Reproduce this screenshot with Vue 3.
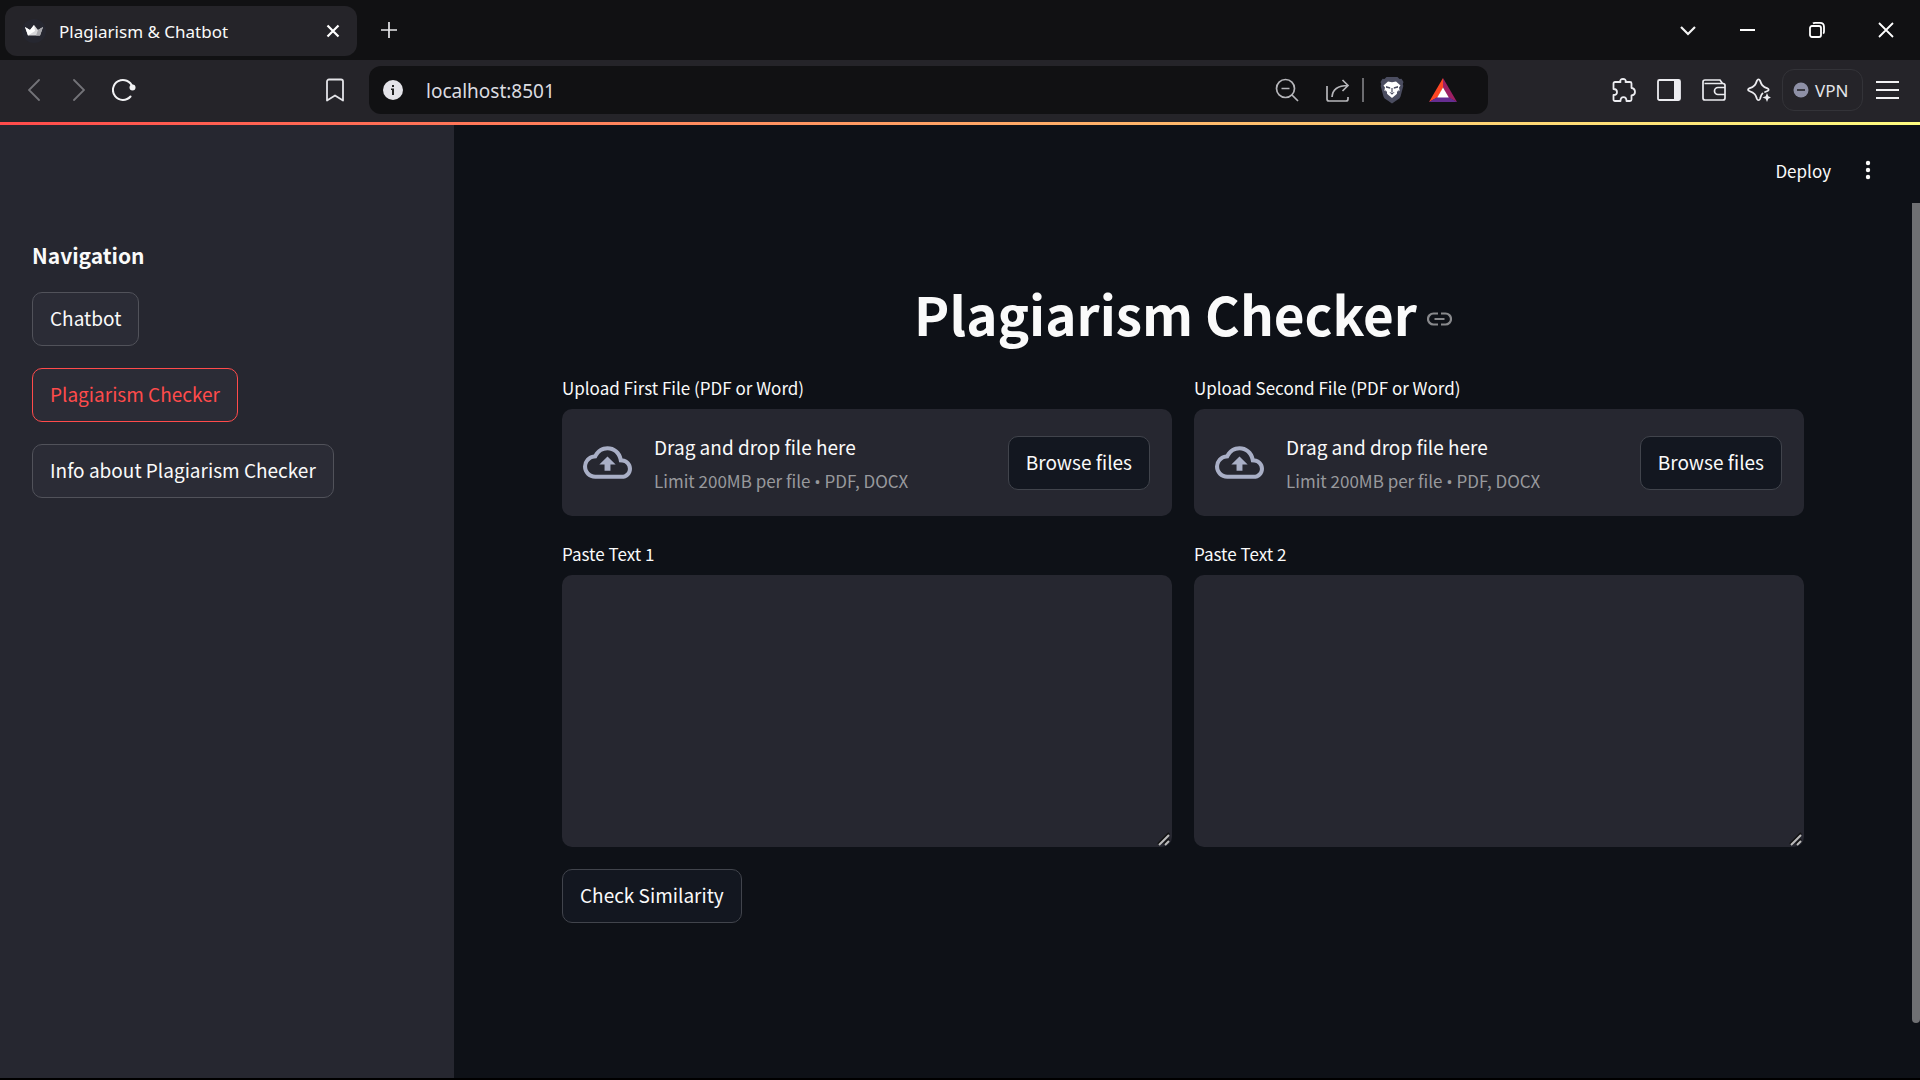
<script setup>
import { ref } from 'vue'

const address = ref('localhost:8501')
const pages = ['Chatbot', 'Plagiarism Checker', 'Info about Plagiarism Checker']
const current = ref('Plagiarism Checker')
const documents = [
  { id: 1, upload: 'Upload First File (PDF or Word)', paste: 'Paste Text 1' },
  { id: 2, upload: 'Upload Second File (PDF or Word)', paste: 'Paste Text 2' },
]
const texts = ref({ 1: '', 2: '' })

function browse(id) {
  document.getElementById(`file-${id}`).click()
}
</script>

<template>
  <div class="window">
    <div class="tabs">
      <div class="tab">
        <svg class="crown" width="24" height="24" viewBox="0 0 24 24">
          <circle cx="12" cy="12" r="12" fill="#262730" />
          <path d="M3 8l5 3 4-5 4 5 5-3-3 8.500H6z" fill="#d8d8da" />
          <path d="M3 8l5 3 4-5 1 6-7 4.500z" fill="#fff" />
          <path d="M21 8l-5 3-2 5.500h4z" fill="#a8a8ac" />
        </svg>
        <span class="tab-title">Plagiarism &amp; Chatbot</span>
        <button class="icon" aria-label="Close tab">
          <svg width="14" height="14" viewBox="0 0 14 14" stroke="#fff" stroke-width="2.2"><path d="M1.500 1.500l11 11M12.500 1.500l-11 11" /></svg>
        </button>
      </div>
      <button class="icon new-tab" aria-label="New tab">
        <svg width="16" height="16" viewBox="0 0 16 16" stroke="#e8e8ea" stroke-width="1.700"><path d="M8 0v16M0 8h16" /></svg>
      </button>
      <div class="controls">
        <button class="icon" aria-label="Search tabs">
          <svg width="16" height="16" viewBox="0 0 16 16" fill="none" stroke="#f4f4f4" stroke-width="2.200"><path d="M1 5l7 7 7-7" /></svg>
        </button>
        <button class="icon" aria-label="Minimize">
          <svg width="16" height="16" viewBox="0 0 16 16" fill="#fff"><path d="M0 7h15v2H0z" /></svg>
        </button>
        <button class="icon" aria-label="Restore">
          <svg width="16" height="16" viewBox="0 0 16 16" fill="none" stroke="#fff" stroke-width="1.800">
            <rect x="1" y="4" width="11" height="11" rx="2" />
            <path d="M4 1.500c.5-.5 1-.6 2-.6h5c2.500 0 4 1.500 4 4v4.500c0 1-.2 1.600-.8 2.200" />
          </svg>
        </button>
        <button class="icon" aria-label="Close window">
          <svg width="16" height="16" viewBox="0 0 16 16" stroke="#fff" stroke-width="1.800"><path d="M1 1l14 14M15 1L1 15" /></svg>
        </button>
      </div>
    </div>

    <div class="toolbar">
      <div class="history">
        <button class="icon" aria-label="Back">
          <svg width="12" height="22" viewBox="0 0 12 22" fill="none" stroke="#737378" stroke-width="1.800" stroke-linecap="round"><path d="M11 1L1 11l10 10" /></svg>
        </button>
        <button class="icon" aria-label="Forward">
          <svg width="12" height="22" viewBox="0 0 12 22" fill="none" stroke="#737378" stroke-width="1.800" stroke-linecap="round"><path d="M1 1l10 10L1 21" /></svg>
        </button>
        <button class="icon" aria-label="Reload">
          <svg width="24" height="24" viewBox="0 0 24 24" fill="none" stroke="#f2f2f4" stroke-width="2" stroke-linecap="round">
            <path d="M18.500 18.500A10 10 0 1 1 20.500 9" /><circle cx="20.500" cy="9.500" r="3" fill="#f2f2f4" stroke="none" />
          </svg>
        </button>
      </div>
      <button class="icon bookmark" aria-label="Bookmark">
        <svg width="18" height="24" viewBox="0 0 18 24" fill="none" stroke="#e4e4e8" stroke-width="1.800" stroke-linejoin="round"><path d="M3 1.500h12a2 2 0 0 1 2 2V22.500l-8-5-8 5V3.500a2 2 0 0 1 2-2z" /></svg>
      </button>
      <div class="address">
        <svg width="20" height="20" viewBox="0 0 20 20"><circle cx="10" cy="10" r="10" fill="#e4e3e9" /><path d="M9 5h2v2H9zM8 8.500h3V15H9v-5H8z" fill="#222" /></svg>
        <input v-model="address" type="text" aria-label="Address" />
        <div class="actions">
          <button class="icon" aria-label="Zoom">
            <svg width="24" height="24" viewBox="0 0 24 24" fill="none" stroke="#b6b6ba" stroke-width="1.700"><circle cx="10.500" cy="10.500" r="9" /><path d="M6.500 10.500h8M17 17l6 6" /></svg>
          </button>
          <button class="icon share" aria-label="Share">
            <svg width="24" height="24" viewBox="0 0 24 24" fill="none" stroke="#b6b6ba" stroke-width="1.700"><path d="M1 8v13a2 2 0 0 0 2 2h17a2 2 0 0 0 2-2v-2M6 19C6.500 12 11 7.500 22 7.500M16.500 2l5.500 5.500-5.500 5.500" /></svg>
          </button>
          <span class="divider"></span>
          <button class="icon shield" aria-label="Shields">
            <svg width="24" height="28" viewBox="0 0 24 28">
              <path d="M6.500 1h11l2 2 2-.2 2 3.200-.7 2 .5 2-2.600 10c-.4 1.500-1.300 2.500-2.500 3.300L12 27.500l-6.200-4.200c-1.200-.8-2.100-1.800-2.500-3.300L.7 10l.5-2-.7-2 2-3.200 2 .2z" fill="#4b4d60" />
              <path d="M8 5.500l4 .8 4-.8 4.500 4-1.500 2 .6 3-3.400 4-4.200 3.500-4.200-3.500-3.400-4 .6-3-1.500-2z" fill="#fff" />
              <path d="M6 10l4.200 1.200v1.600L6 11.800zM18 10l-4.200 1.200v1.600l4.200-1zM9.300 16l2.700.8 2.700-.8-2.700 2.700zM11.400 12h1.200v4h-1.200zM5.500 14l1.500 2v3l-2-3zM18.500 14L17 16v3l2-3z" fill="#4b4d60" />
            </svg>
          </button>
          <button class="icon" aria-label="Rewards">
            <svg width="28" height="24" viewBox="0 0 28 24">
              <path d="M14 0L0 24l8.500-4.500L14 10z" fill="#ff4724" /><path d="M14 0l14 24-8.500-4.500L14 10z" fill="#9e1f63" /><path d="M0 24h28l-8.500-5h-11z" fill="#662d91" /><path d="M14 9.500L19.800 19.500H8.200z" fill="#fff" />
            </svg>
          </button>
        </div>
      </div>
      <div class="extras">
        <button class="icon" aria-label="Extensions">
          <svg width="24" height="24" viewBox="0 0 24 24" fill="none" stroke="#ececf0" stroke-width="1.800" stroke-linejoin="round"><path d="M3 4h5.500C7.500 1.800 9.500 1 11 1s3.500.8 2.500 3H18a1.500 1.500 0 0 1 1.500 1.500V10c2.200.3 3.500 2 3.500 4s-1.300 3.300-3.500 3.500v4A1.500 1.500 0 0 1 18 23h-3.500c0-2.500-1-3.800-3-3.800s-3 1.300-3 3.800H3a1.500 1.500 0 0 1-1.500-1.500V17C4 17 5 16 5 14s-1-3-3.500-3V5.500A1.500 1.500 0 0 1 3 4z" /></svg>
        </button>
        <button class="icon" aria-label="Sidebar">
          <svg width="24" height="24" viewBox="0 0 24 24" fill="none" stroke="#ececf0" stroke-width="1.800"><rect x="1" y="2" width="22" height="20" rx="1.500" /><path d="M17 2h6v20h-6z" fill="#ececf0" stroke="none" /></svg>
        </button>
        <button class="icon" aria-label="Wallet">
          <svg width="24" height="24" viewBox="0 0 24 24" fill="none" stroke="#ececf0" stroke-width="1.700"><path d="M1 4a2 2 0 0 1 2-2h15l2.500 3.500H2.500" /><path d="M1 4v16a2 2 0 0 0 2 2h18a2 2 0 0 0 2-2V7.500a2 2 0 0 0-2-2M23 9.500h-7a3.500 3.500 0 0 0 0 7h7" /></svg>
        </button>
        <button class="icon" aria-label="Leo AI">
          <svg width="24" height="24" viewBox="0 0 24 24" fill="none" stroke="#ececf0" stroke-width="1.800" stroke-linejoin="round" stroke-linecap="round"><path d="M15.500 15.500c-1.500 1-1.700 3.500-2.500 5.500-.6 1.400-2.400 1.400-3 0-1.200-3.500-1.600-5.800-7.800-8C.700 12.500.7 11 2.200 10.400 8 8.500 8.800 6 10 2.500c.6-1.400 2.400-1.400 3 0 1.200 3.500 2 6 7.500 7.900 1.500.6 1.500 2.100 0 2.600l-2.500 1" /><path d="M20 15l1.300 3.200 2.700 1.300-2.700 1.300L20 24l-1.300-3.200-3.200-1.300 3.200-1.300z" fill="#ececf0" stroke="none" /></svg>
        </button>
      </div>
      <button class="vpn">
        <svg width="16" height="16" viewBox="0 0 16 16"><circle cx="8" cy="8" r="7.500" fill="#8e90a6" /><path d="M4 8h8" stroke="#252429" stroke-width="1.600" /></svg>
        VPN
      </button>
      <button class="icon" aria-label="Menu">
        <svg width="23" height="20" viewBox="0 0 23 20" stroke="#f2f2f4" stroke-width="1.800"><path d="M0 2h23M0 10h23M0 18h23" /></svg>
      </button>
    </div>
    <div class="rainbow"></div>

    <div class="app">
      <nav class="sidebar">
        <h2>Navigation</h2>
        <button v-for="page in pages" :key="page" class="button" :class="{ active: page === current }" @click="current = page">{{ page }}</button>
      </nav>

      <div class="main">
        <header>
          <button class="deploy">Deploy</button>
          <button class="icon" aria-label="App menu">
            <svg width="24" height="24" viewBox="0 0 24 24" fill="#fafafa"><circle cx="12" cy="5" r="2.200" /><circle cx="12" cy="12" r="2.200" /><circle cx="12" cy="19" r="2.200" /></svg>
          </button>
        </header>
        <div class="viewport">
          <main>
            <div class="heading">
              <h1>Plagiarism Checker</h1>
              <a href="#plagiarism-checker" aria-label="Link to heading">
                <svg width="25" height="14" viewBox="0 0 25 14" fill="none" stroke="#88898c" stroke-width="2.200"><path d="M11 1.500H6.500a5.500 5.500 0 0 0 0 11H11M14 1.500h4.500a5.500 5.500 0 0 1 0 11H14M7.500 7h10" /></svg>
              </a>
            </div>
            <div class="columns">
              <section v-for="doc in documents" :key="doc.id">
                <label :for="`file-${doc.id}`">{{ doc.upload }}</label>
                <div class="dropzone">
                  <svg width="49" height="49" viewBox="0 0 24 24" fill="#a9afc6"><path d="M19.350 10.040A7.490 7.490 0 0 0 12 4C9.110 4 6.600 5.640 5.350 8.040A5.994 5.994 0 0 0 0 14c0 3.310 2.690 6 6 6h13c2.760 0 5-2.240 5-5 0-2.640-2.050-4.780-4.650-4.960zM19 18H6c-2.210 0-4-1.790-4-4 0-2.050 1.530-3.760 3.560-3.970l1.070-.11.5-.95A5.469 5.469 0 0 1 12 6c2.620 0 4.880 1.860 5.390 4.430l.3 1.500 1.530.11A2.980 2.980 0 0 1 22 15c0 1.650-1.350 3-3 3zM8 13h2.550v3h2.900v-3H16l-4-4-4 4z" /></svg>
                  <div class="hint">
                    <span>Drag and drop file here</span>
                    <small>Limit 200MB per file <span class="bullet">•</span> PDF, DOCX</small>
                  </div>
                  <input :id="`file-${doc.id}`" type="file" accept=".pdf,.docx" hidden />
                  <button class="button" @click="browse(doc.id)">Browse files</button>
                </div>
                <label :for="`text-${doc.id}`">{{ doc.paste }}</label>
                <textarea :id="`text-${doc.id}`" v-model="texts[doc.id]"></textarea>
              </section>
            </div>
            <button class="button">Check Similarity</button>
          </main>
          <div class="scrollbar"><div class="thumb"></div></div>
        </div>
      </div>
    </div>
  </div>
</template>

<style>
body {
  background: #000;
}
</style>

<style scoped>
* {
  box-sizing: border-box;
}
.window {
  display: flex;
  flex-direction: column;
  min-height: 100vh;
  border-bottom: 2px solid #000;
  color: #fafafa;
  font-family: "Noto Sans CJK SC", sans-serif;
}
button {
  font: inherit;
  color: inherit;
  cursor: pointer;
}
svg {
  display: block;
  flex: none;
}
.icon {
  flex: none;
  padding: 0;
  border: 0;
  background: none;
}
.tabs {
  display: flex;
  align-items: center;
  height: 60px;
  padding: 0 26px 0 5px;
  background: #111113;
  font-family: "Noto Sans", sans-serif;
}
.tab {
  display: flex;
  align-items: center;
  gap: 13px;
  width: 352px;
  height: 50px;
  margin-top: 2px;
  padding: 0 17px;
  border-radius: 12px;
  background: #252429;
  font-size: 17px;
}
.tab-title {
  flex: 1;
}
.new-tab {
  margin-left: 24px;
}
.controls {
  display: flex;
  gap: 53px;
  margin-left: auto;
}
.controls .icon:first-child {
  margin-right: -9px;
}
.toolbar {
  display: flex;
  align-items: center;
  height: 62px;
  padding: 0 21px 2px 28px;
  background: #252429;
  font-family: "Noto Sans", sans-serif;
}
.history {
  display: flex;
  align-items: center;
  gap: 33px;
}
.history .icon:last-child {
  margin-left: -6px;
}
.bookmark {
  margin-left: 190px;
}
.address {
  display: flex;
  flex: 1;
  align-items: center;
  height: 48px;
  margin: 0 124px 0 25px;
  padding: 0 31px 0 14px;
  border-radius: 12px;
  background: #111113;
}
.address input {
  flex: 1;
  min-width: 0;
  margin-left: 23px;
  padding: 1px 0 0;
  border: 0;
  outline: 0;
  background: none;
  color: #dcdce0;
  font: inherit;
  font-size: 19px;
}
.actions {
  display: flex;
  align-items: center;
}
.share {
  margin: 0 12px 0 27px;
}
.divider {
  width: 2px;
  height: 24px;
  background: #6c6c70;
}
.shield {
  margin: 0 25px 0 16px;
}
.extras {
  display: flex;
  gap: 21px;
}
.vpn {
  display: flex;
  align-items: center;
  gap: 6px;
  width: 81px;
  height: 42px;
  margin: 0 13px 0 11px;
  padding: 0 10px;
  border: 1px solid #333338;
  border-radius: 12px;
  background: none;
  color: #e4e4e8;
  font-size: 17px;
}
.rainbow {
  height: 3px;
  background: linear-gradient(90deg, #ff4b4b, #fffd80);
}
.app {
  display: flex;
  flex: 1;
}
.sidebar {
  display: flex;
  flex: 0 0 454px;
  flex-direction: column;
  align-items: flex-start;
  gap: 22px;
  padding: 115px 32px 32px;
  background: #262730;
}
h2 {
  margin: 0;
  font-size: 21px;
  line-height: 30px;
}
.button {
  height: 54px;
  padding: 0 17px 2px;
  border: 1px solid #41444c;
  border-radius: 10px;
  background: #131720;
  font-size: 19px;
  line-height: 28px;
  white-space: nowrap;
}
.sidebar .button {
  border-color: #51525a;
  background: #2b2c36;
}
.sidebar .active {
  border-color: #ff4b4b;
  color: #ff4b4b;
}
.main {
  display: flex;
  flex: 1;
  flex-direction: column;
  background: #0e1117;
}
header {
  display: flex;
  align-items: center;
  justify-content: flex-end;
  gap: 25px;
  height: 78px;
  padding: 12px 40px 0 0;
}
.deploy {
  padding: 0;
  border: 0;
  background: none;
  font-size: 17px;
}
.viewport {
  display: flex;
  flex: 1;
}
main {
  flex: 1;
  padding: 77px 108px 40px;
}
.heading {
  display: flex;
  align-items: center;
  justify-content: center;
  gap: 10px;
  margin-bottom: 30px;
}
.heading a {
  margin-top: 12px;
}
h1 {
  margin: 0;
  font-size: 53px;
  line-height: 66px;
}
.columns {
  display: flex;
  gap: 22px;
  margin-bottom: 22px;
}
section {
  display: flex;
  flex: 1;
  flex-direction: column;
}
label {
  margin-bottom: 9px;
  font-size: 17px;
  line-height: 24px;
}
.dropzone {
  display: flex;
  align-items: center;
  height: 107px;
  margin-bottom: 26px;
  padding: 0 22px 0 21px;
  border-radius: 10px;
  background: #262730;
}
.hint {
  display: flex;
  flex: 1;
  flex-direction: column;
  gap: 8px;
  margin-left: 22px;
  padding-top: 2px;
  font-size: 19px;
  line-height: 28px;
}
.hint small {
  color: #98999d;
  font-size: 17px;
  line-height: 24px;
}
.bullet {
  font-family: "Open Sans", sans-serif;
}
textarea {
  height: 272px;
  padding: 16px;
  border: 0;
  border-radius: 10px;
  outline: 0;
  background: #262730;
  color: inherit;
  font: inherit;
  font-size: 19px;
  resize: vertical;
}
textarea::-webkit-resizer {
  background: url("data:image/svg+xml,%3Csvg xmlns='http://www.w3.org/2000/svg' width='15' height='15' fill='none'%3E%3Cpath d='M1 12L12 1M7 12l5-5' stroke='%23111' stroke-width='2'/%3E%3Cpath d='M2 13L12 3M8 13l4-4' stroke='%23bbb' stroke-width='2'/%3E%3C/svg%3E") no-repeat;
}
.scrollbar {
  flex: none;
  width: 8px;
  padding-bottom: 55px;
}
.thumb {
  height: 100%;
  border-radius: 0 0 4px 4px;
  background: #6f7073;
}
</style>
